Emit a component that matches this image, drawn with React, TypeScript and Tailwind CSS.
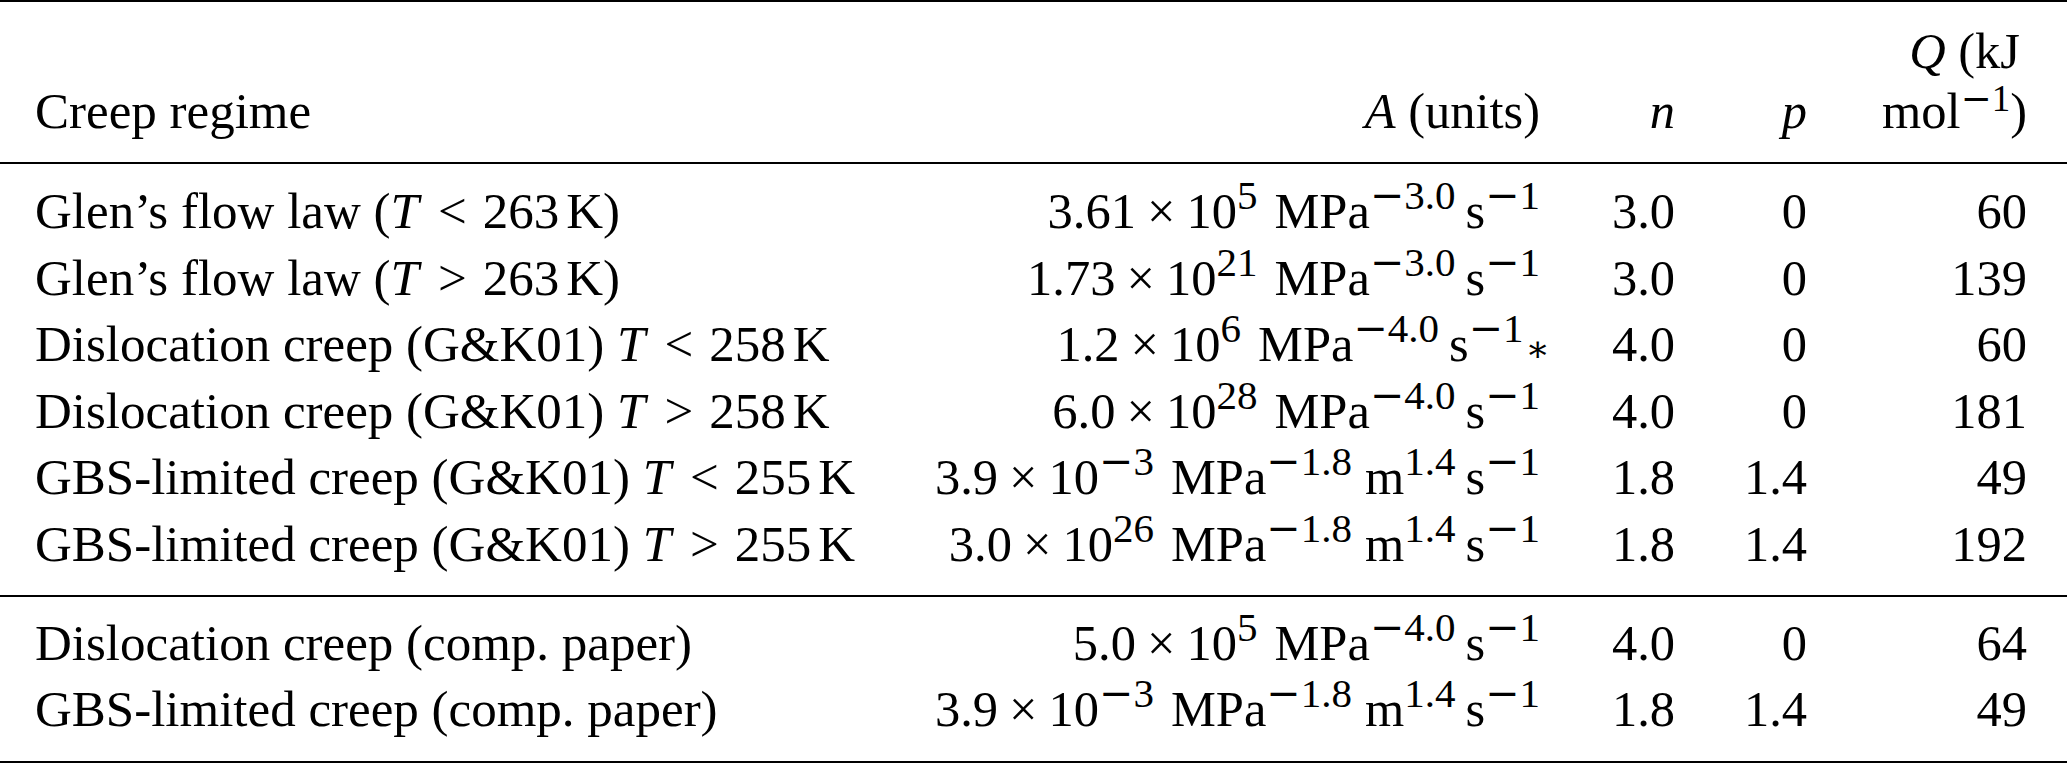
import React from "react";

const Minus = () => <span className="font-['DejaVu_Serif',serif]">−</span>;

const Sup = ({ children }: { children: React.ReactNode }) => (
  <sup className="relative top-[-19px] align-baseline text-[41px] leading-none">{children}</sup>
);

const Neg = ({ v }: { v: string }) => (
  <>
    <Minus />
    {v}
  </>
);

type Unit = [string, React.ReactNode];

function AVal({ mant, exp, units, star }: { mant: string; exp: React.ReactNode; units: Unit[]; star?: boolean }) {
  return (
    <span className="whitespace-nowrap">
      {mant}
      <span className="mx-[11px]">×</span>
      10
      <Sup>{exp}</Sup>
      {units.map(([b, e], i) => (
        <span key={i} className={i === 0 ? "ml-[17px]" : b === "m" ? "ml-[13px]" : "ml-[10px]"}>
          {b}
          <Sup>{e}</Sup>
        </span>
      ))}
      {star && (
        <span className="font-['DejaVu_Serif',serif] text-[36px] leading-none ml-[2px] mr-[-10px]">∗</span>
      )}
    </span>
  );
}

const I = ({ children }: { children: React.ReactNode }) => <span className="italic">{children}</span>;

function Cond({ op, t }: { op: string; t: string }) {
  return (
    <>
      <I>T</I>
      <span className="ml-[19px] mr-[16px]">{op}</span>
      {t}
      <span className="ml-[7px]">K</span>
    </>
  );
}

type Row = {
  name: React.ReactNode;
  a: React.ReactNode;
  n: string;
  p: string;
  q: string;
};

const mpa3: Unit[] = [["MPa", <Neg v="3.0" />], ["s", <Neg v="1" />]];
const mpa4: Unit[] = [["MPa", <Neg v="4.0" />], ["s", <Neg v="1" />]];
const gbs: Unit[] = [["MPa", <Neg v="1.8" />], ["m", "1.4"], ["s", <Neg v="1" />]];

const rows1: Row[] = [
  {
    name: (
      <>
        Glen’s flow law (<Cond op="<" t="263" />)
      </>
    ),
    a: <AVal mant="3.61" exp="5" units={mpa3} />,
    n: "3.0",
    p: "0",
    q: "60",
  },
  {
    name: (
      <>
        Glen’s flow law (<Cond op=">" t="263" />)
      </>
    ),
    a: <AVal mant="1.73" exp="21" units={mpa3} />,
    n: "3.0",
    p: "0",
    q: "139",
  },
  {
    name: (
      <>
        Dislocation creep (G&amp;K01) <Cond op="<" t="258" />
      </>
    ),
    a: <AVal mant="1.2" exp="6" units={mpa4} star />,
    n: "4.0",
    p: "0",
    q: "60",
  },
  {
    name: (
      <>
        Dislocation creep (G&amp;K01) <Cond op=">" t="258" />
      </>
    ),
    a: <AVal mant="6.0" exp="28" units={mpa4} />,
    n: "4.0",
    p: "0",
    q: "181",
  },
  {
    name: (
      <>
        GBS-limited creep (G&amp;K01) <Cond op="<" t="255" />
      </>
    ),
    a: <AVal mant="3.9" exp={<Neg v="3" />} units={gbs} />,
    n: "1.8",
    p: "1.4",
    q: "49",
  },
  {
    name: (
      <>
        GBS-limited creep (G&amp;K01) <Cond op=">" t="255" />
      </>
    ),
    a: <AVal mant="3.0" exp="26" units={gbs} />,
    n: "1.8",
    p: "1.4",
    q: "192",
  },
];

const rows2: Row[] = [
  {
    name: <>Dislocation creep (comp. paper)</>,
    a: <AVal mant="5.0" exp="5" units={mpa4} />,
    n: "4.0",
    p: "0",
    q: "64",
  },
  {
    name: <>GBS-limited creep (comp. paper)</>,
    a: <AVal mant="3.9" exp={<Neg v="3" />} units={gbs} />,
    n: "1.8",
    p: "1.4",
    q: "49",
  },
];

const gridCols = "grid grid-cols-[880px_625px_135px_132px_220px] pl-[35px] pr-[40px]";

function Body({ rows, pt, pb }: { rows: Row[]; pt: string; pb: string }) {
  return (
    <div className={`${gridCols} leading-[66.6px] ${pt} ${pb}`}>
      {rows.map((r, i) => (
        <React.Fragment key={i}>
          <div className="whitespace-nowrap h-[66.6px] text-[51px]">{r.name}</div>
          <div className="text-right h-[66.6px]">{r.a}</div>
          <div className="text-right h-[66.6px]">{r.n}</div>
          <div className="text-right h-[66.6px]">{r.p}</div>
          <div className="text-right h-[66.6px]">{r.q}</div>
        </React.Fragment>
      ))}
    </div>
  );
}

export default function App() {
  return (
    <div className="w-[2067px] h-[764px] bg-white text-black font-['Liberation_Serif','Times_New_Roman',serif] text-[50.5px] overflow-hidden">
      <div className="h-[2px] bg-black" />
      <div className={`${gridCols} items-end leading-[60px] h-[160px] pt-[19px] pb-[21px]`}>
        <div className="text-[51px]">Creep regime</div>
        <div className="text-right whitespace-nowrap">
          <I>A</I> (units)
        </div>
        <div className="text-right">
          <I>n</I>
        </div>
        <div className="text-right">
          <I>p</I>
        </div>
        <div className="text-right">
          <div className="pr-[7px]">
            <I>Q</I> (kJ
          </div>
          <div>
            mol
            <sup className="relative top-[-17px] align-baseline text-[37px] leading-none">
              <Neg v="1" />
            </sup>
            )
          </div>
        </div>
      </div>
      <div className="h-[2px] bg-black" />
      <Body rows={rows1} pt="pt-[14px]" pb="pb-[17px]" />
      <div className="h-[2px] bg-black" />
      <Body rows={rows2} pt="pt-[13px]" pb="pb-[18px]" />
      <div className="h-[2px] bg-black" />
    </div>
  );
}
